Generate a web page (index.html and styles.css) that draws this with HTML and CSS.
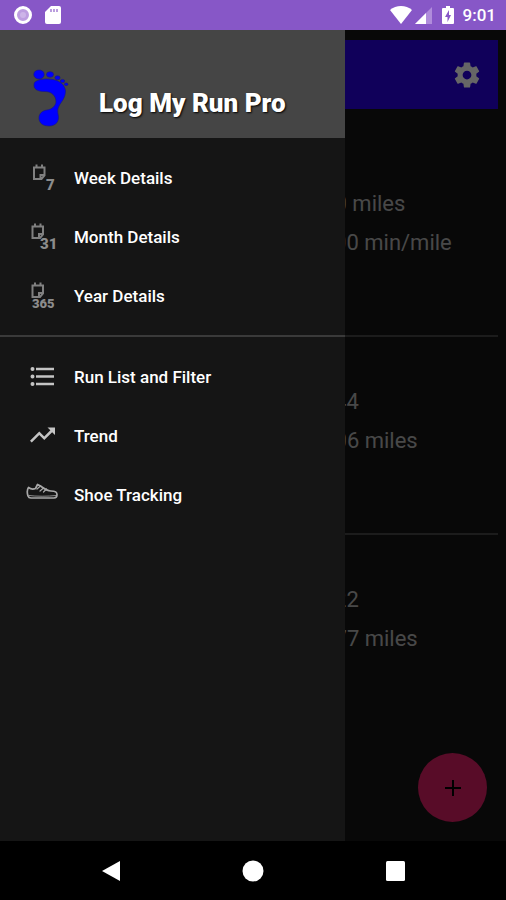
FILE: index.html
```html
<!DOCTYPE html>
<html lang="en">
<head>
  <meta charset="UTF-8" />
  <meta name="viewport" content="width=device-width, initial-scale=1.0"/>
  <title>Log My Run Pro</title>
  <link rel="stylesheet" href="styles.css">
</head>
<body>

  <header class="status-bar">
    <div class="status-icons">
      <svg width="20" height="20" viewBox="0 0 20 20">
        <circle cx="10" cy="10" r="7.5" fill="#bd9de0" stroke="#fff" stroke-width="3"/>
        <circle cx="10" cy="10" r="3" fill="#cdb4e8"/>
      </svg>
      <svg width="16" height="20" viewBox="0 0 16 20">
        <path d="M6 1h8a2 2 0 0 1 2 2v14a2 2 0 0 1-2 2H2a2 2 0 0 1-2-2V7z" fill="#fff"/>
        <path d="M6 4v3M9 4v3M12 4v3" stroke="#a57fd4" stroke-width="1.5"/>
      </svg>
    </div>
    <div class="status-icons right">
      <svg class="wifi" width="22" height="20" viewBox="0 0 22 20">
        <path d="M11 19L0 5C3 2.5 7 1 11 1s8 1.5 11 4z" fill="#fff"/>
      </svg>
      <svg class="signal" width="18" height="20" viewBox="0 0 18 20">
        <path d="M0 19L17 2v17z" fill="#b08cdb"/>
        <path d="M0 19L11 8v11z" fill="#fff"/>
      </svg>
      <svg class="battery" width="12" height="20" viewBox="0 0 12 20">
        <path d="M4 1h4v2h3a1 1 0 0 1 1 1v14a1 1 0 0 1-1 1H1a1 1 0 0 1-1-1V4a1 1 0 0 1 1-1h3z" fill="#fff"/>
        <path d="M7 5L3 12h2.5v5L9 10H7z" fill="#8757c7"/>
      </svg>
      <span class="clock">9:01</span>
    </div>
  </header>

  <div class="stage">
    <main class="page">
      <div class="toolbar">
        <button class="icon-btn" aria-label="Settings">
          <svg width="30" height="30" viewBox="0 0 24 24" fill="#fff">
            <path d="M19.43 12.98c.04-.32.07-.64.07-.98s-.03-.66-.07-.98l2.11-1.65c.19-.15.24-.42.12-.64l-2-3.46c-.12-.22-.39-.3-.61-.22l-2.49 1c-.52-.4-1.08-.73-1.69-.98l-.38-2.65C14.46 2.18 14.25 2 14 2h-4c-.25 0-.46.18-.49.42l-.38 2.65c-.61.25-1.17.59-1.69.98l-2.49-1c-.23-.09-.49 0-.61.22l-2 3.46c-.13.22-.07.49.12.64l2.11 1.65c-.04.32-.07.65-.07.98s.03.66.07.98l-2.11 1.65c-.19.15-.24.42-.12.64l2 3.46c.12.22.39.3.61.22l2.49-1c.52.4 1.08.73 1.69.98l.38 2.65c.03.24.24.42.49.42h4c.25 0 .46-.18.49-.42l.38-2.65c.61-.25 1.17-.59 1.69-.98l2.49 1c.23.09.49 0 .61-.22l2-3.46c.12-.22.07-.49-.12-.64zM12 15.5c-1.93 0-3.5-1.57-3.5-3.5s1.57-3.5 3.5-3.5 3.5 1.57 3.5 3.5-1.57 3.5-3.5 3.5z"/>
          </svg>
        </button>
      </div>

      <section class="stats">
        <p>0.00 miles</p>
        <p>00:00 min/mile</p>
      </section>
      <section class="stats">
        <p>10:44</p>
        <p>10.06 miles</p>
      </section>
      <section class="stats">
        <p>12:22</p>
        <p>17.77 miles</p>
      </section>
    </main>

    <button class="fab" aria-label="Add run">
      <svg width="18" height="18" viewBox="0 0 18 18">
        <path d="M9 1v16M1 9h16" stroke="#000" stroke-width="2"/>
      </svg>
    </button>

    <div class="scrim"></div>

    <nav class="drawer">
      <div class="drawer-header">
        <svg width="36" height="58" viewBox="0 0 36 58" fill="#0000fe" stroke="#14148c" stroke-width=".6">
          <ellipse cx="6" cy="5.5" rx="5.2" ry="4.5"/>
          <ellipse cx="17" cy="5.5" rx="3.5" ry="2.8"/>
          <ellipse cx="24.5" cy="8.8" rx="2.6" ry="2"/>
          <ellipse cx="29.5" cy="12" rx="2.2" ry="1.6"/>
          <ellipse cx="33.2" cy="15.3" rx="1.8" ry="1.3"/>
          <path d="M2 13C6 9.500 14 9.500 20 10.500C27 12 32 16 32.500 22C32.500 29 28 33 26 37C24.500 40 24.500 42 25 45C27 52 23 57 16 57C10 57 6 54 6 49C6 44 10 41.500 14 41C19 40.500 22.500 37 23 33C23 27 19 22.500 12 22.500C6 22.500 1.500 21 1 17C1 15.500 1 14 2 13z"/>
        </svg>
        <h1>Log My Run Pro</h1>
      </div>

      <ul class="menu">
        <li><a href="#week">
          <svg class="calendar" width="32" height="32" viewBox="0 0 32 32">
            <path d="M8 5.5h10.500v8L15.500 17H8zM10.500 2.500v3M16 2.500v3M18 13h-3.500v3.500"/>
            <text x="20" y="28" font-size="15">7</text>
          </svg>
          Week Details
        </a></li>
        <li><a href="#month">
          <svg class="calendar" width="32" height="32" viewBox="0 0 32 32">
            <path d="M6.500 5.500H17v8L14 17H6.500zM9 2.500v3M14.500 2.500v3M16.500 13H13v3.500"/>
            <text x="14" y="28" font-size="15">31</text>
          </svg>
          Month Details
        </a></li>
        <li><a href="#year">
          <svg class="calendar" width="32" height="32" viewBox="0 0 32 32">
            <path d="M6.500 5.500H17v8L14 17H6.500zM9 2.500v3M14.500 2.500v3M16.500 13H13v3.500"/>
            <text x="6" y="28" font-size="13">365</text>
          </svg>
          Year Details
        </a></li>
      </ul>

      <ul class="menu">
        <li><a href="#runs">
          <svg width="32" height="32" viewBox="0 0 32 32" fill="none" stroke="#c4c4c4" stroke-width="2.5">
            <path d="M10 8h18M10 15.500h18M10 23h18"/>
            <path d="M6.500 8h.01M6.500 15.500h.01M6.500 23h.01" stroke-width="4" stroke-linecap="round"/>
          </svg>
          Run List and Filter
        </a></li>
        <li><a href="#trend">
          <svg width="32" height="32" viewBox="0 0 32 32" fill="#c4c4c4">
            <path transform="translate(1.5 0) scale(1.25)" d="M16 6l2.29 2.29-4.88 4.88-4-4L2 16.59 3.41 18l6-6 4 4 6.3-6.29L22 12V6z"/>
          </svg>
          Trend
        </a></li>
        <li><a href="#shoes">
          <svg width="32" height="32" viewBox="0 0 32 32" fill="none" stroke="#a8a8a8" stroke-width="1.7" stroke-linejoin="round" stroke-linecap="round">
            <path d="M2.500 8.500C1.200 10.500 1 14 2 17C2.500 18.500 3.500 19 5 19H28C30 19 31 17.500 31 15.500C31 12.500 29 12 25 12C22 12 19 10.500 14.500 7L11.500 5.500L9.500 9.500C7 10.500 4.500 10 2.500 8.500z"/>
            <path d="M3 16.500C10 17.500 22 17.500 30 16.500" stroke-width=".8"/>
            <path d="M11 10l3.500-3M14 12l3.500-3M17.500 13l3-3" stroke-width="1.2"/>
          </svg>
          Shoe Tracking
        </a></li>
      </ul>
    </nav>
  </div>

  <footer class="nav-bar">
    <button class="icon-btn" aria-label="Back">
      <svg width="22" height="22" viewBox="0 0 22 22" fill="#fff"><path d="M20 1v20L2 11z"/></svg>
    </button>
    <button class="icon-btn" aria-label="Home">
      <svg width="22" height="22" viewBox="0 0 22 22" fill="#fff"><circle cx="11" cy="11" r="10.5"/></svg>
    </button>
    <button class="icon-btn" aria-label="Recent apps">
      <svg width="22" height="22" viewBox="0 0 22 22" fill="#fff"><rect x="2" y="1" width="19" height="20" rx="1.5"/></svg>
    </button>
  </footer>

</body>
</html>
```
FILE: styles.css
```css
* {
  box-sizing: border-box;
}

body {
  margin: 0;
  min-height: 100vh;
  display: flex;
  flex-direction: column;
  background-color: #000;
  color: #fff;
  font-family: Roboto, sans-serif;
}

svg {
  display: block;
  flex-shrink: 0;
}

button {
  padding: 0;
  border: none;
  background: none;
  cursor: pointer;
}

.icon-btn {
  display: flex;
  align-items: center;
  justify-content: center;
}

.status-bar {
  display: flex;
  justify-content: space-between;
  align-items: center;
  height: 30px;
  padding: 0 10px 0 13px;
  background-color: #8757c7;
}

.status-icons {
  display: flex;
  align-items: center;
  gap: 12px;
}

.status-icons.right {
  gap: 9px;
}

.wifi {
  margin-right: -6px;
}

.clock {
  font-size: 17px;
  font-weight: 500;
  line-height: 30px;
}

.stage {
  position: relative;
  flex: 1;
  display: flex;
  flex-direction: column;
  overflow: hidden;
}

.page {
  flex: 1;
  padding: 10px 8px 0;
  background-color: #141414;
}

.toolbar {
  display: flex;
  justify-content: flex-end;
  align-items: center;
  height: 69px;
  margin-bottom: 30px;
  padding-right: 16px;
  background-color: #2800e1;
}

.stats {
  min-height: 198px;
  padding: 45px 0 0 296px;
  border-bottom: 2px solid #464646;
}

.stats:last-child {
  border-bottom: none;
}

.stats p {
  margin: 0;
  font-size: 22px;
  line-height: 39px;
  color: #b4b4b4;
}

.fab {
  position: absolute;
  right: 19px;
  bottom: 19px;
  display: flex;
  align-items: center;
  justify-content: center;
  width: 69px;
  height: 69px;
  border-radius: 50%;
  background-color: #dc1e64;
}

.scrim {
  position: absolute;
  inset: 0;
  background-color: rgba(0, 0, 0, 0.6);
}

.drawer {
  position: absolute;
  top: 0;
  bottom: 0;
  left: 0;
  width: 345px;
  background-color: #151515;
}

.drawer-header {
  display: flex;
  align-items: flex-end;
  gap: 30px;
  height: 108px;
  padding: 0 16px 11px 33px;
  background-color: #454545;
}

.drawer-header h1 {
  margin: 0;
  font-size: 26px;
  font-weight: 900;
  line-height: 48px;
  text-shadow: 1px 1px 2px #000;
}

.menu {
  margin: 0;
  padding: 10px 0;
  list-style: none;
}

.menu + .menu {
  border-top: 2px solid #3a3a3a;
}

.menu a {
  display: flex;
  align-items: center;
  gap: 16px;
  height: 59px;
  padding: 0 26px;
  color: #fff;
  font-size: 17px;
  font-weight: 500;
  text-decoration: none;
}

.calendar path {
  fill: none;
  stroke: #808080;
  stroke-width: 2;
}

.calendar text {
  fill: #8c8c8c;
  font-weight: 900;
}

.nav-bar {
  display: flex;
  justify-content: center;
  align-items: center;
  gap: 120px;
  height: 59px;
  background-color: #000;
}
```
